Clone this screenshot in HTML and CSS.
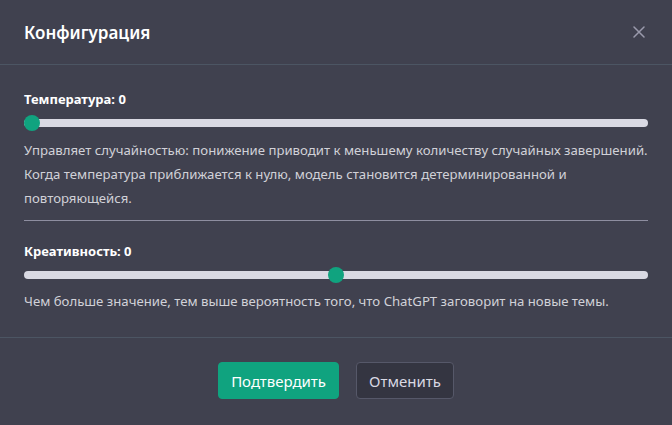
FILE: index.html
```html
<!DOCTYPE html>
<html lang="ru">
<head>
	<meta charset="UTF-8">
	<title>Конфигурация</title>
	<link rel="stylesheet" href="styles.css">
</head>
<body>
	<div class="dialog">
		<div class="dialog_head">
			<h2 class="dialog_title">Конфигурация</h2>
			<span class="dialog_close">
				<svg width="12" height="12" viewBox="0 0 12 12"><path d="M1 1L11 11M11 1L1 11" stroke="#9a9aac" stroke-width="1.5" stroke-linecap="round"/></svg>
			</span>
		</div>
		<div class="dialog_body">
			<div class="field">
				<label class="field_label">Температура: 0</label>
				<input class="slider" type="range" min="0" max="100" value="0">
				<p class="field_desc field_nowrap">Управляет случайностью: понижение приводит к меньшему количеству случайных завершений.<br>Когда температура приближается к нулю, модель становится детерминированной и<br>повторяющейся.</p>
			</div>
			<div class="divider"></div>
			<div class="field field_last">
				<label class="field_label">Креативность: 0</label>
				<input class="slider" type="range" min="0" max="100" value="50">
				<p class="field_desc">Чем больше значение, тем выше вероятность того, что ChatGPT заговорит на новые темы.</p>
			</div>
		</div>
		<div class="dialog_foot">
			<button class="btn btn_ok">Подтвердить</button>
			<button class="btn btn_cancel">Отменить</button>
		</div>
	</div>
</body>
</html>
```

FILE: styles.css
```css
*{
	margin: 0;
	padding: 0;
	box-sizing: border-box;
}
body{
	background-color: #40414f;
	font-family: "Noto Sans", "Open Sans", sans-serif;
	color: #ececf1;
}
.dialog{
	width: 672px;
	height: 425px;
	background-color: #40414f;
}
.dialog_head{
	height: 65px;
	padding: 0 24px;
	display: flex;
	align-items: center;
	justify-content: space-between;
	border-bottom: 1px solid #4c5563;
}
.dialog_title{
	font-size: 17px;
	font-weight: 600;
	color: #fff;
}
.dialog_close{
	display: flex;
	margin-right: 3px;
}
.dialog_body{
	padding: 24px 24px 24px;
	border-bottom: 1px solid #4c5563;
}
.field_label{
	display: block;
	font-size: 13px;
	font-weight: 700;
	line-height: 20px;
	color: #fff;
}
.slider{
	-webkit-appearance: none;
	appearance: none;
	display: block;
	width: 100%;
	height: 8px;
	margin: 10px 0 11px;
	border-radius: 4px;
	background-color: #d9d9e3;
	outline: none;
}
.field_last .slider{
	margin: 10px 0 10px;
}
.slider::-webkit-slider-thumb{
	-webkit-appearance: none;
	width: 16px;
	height: 16px;
	border-radius: 50%;
	background-color: #10a37f;
	border: none;
}
.field_desc{
	font-size: 13.2px;
	line-height: 24px;
	color: #d1d1d8;
}
.field_nowrap{
	white-space: nowrap;
}
.divider{
	height: 1px;
	background-color: #8e8ea0;
	margin: 10px 0 20px;
}
.dialog_foot{
	padding: 24px;
	display: flex;
	justify-content: center;
	gap: 17px;
}
.btn{
	height: 37px;
	padding: 0 12px;
	font-family: "Noto Sans", "Open Sans", sans-serif;
	font-size: 15px;
	border-radius: 4px;
	cursor: pointer;
}
.btn_ok{
	background-color: #10a37f;
	color: #fff;
	border: 1px solid #10a37f;
}
.btn_cancel{
	background-color: #343541;
	color: #d9d9e3;
	border: 1px solid #565869;
}
```
